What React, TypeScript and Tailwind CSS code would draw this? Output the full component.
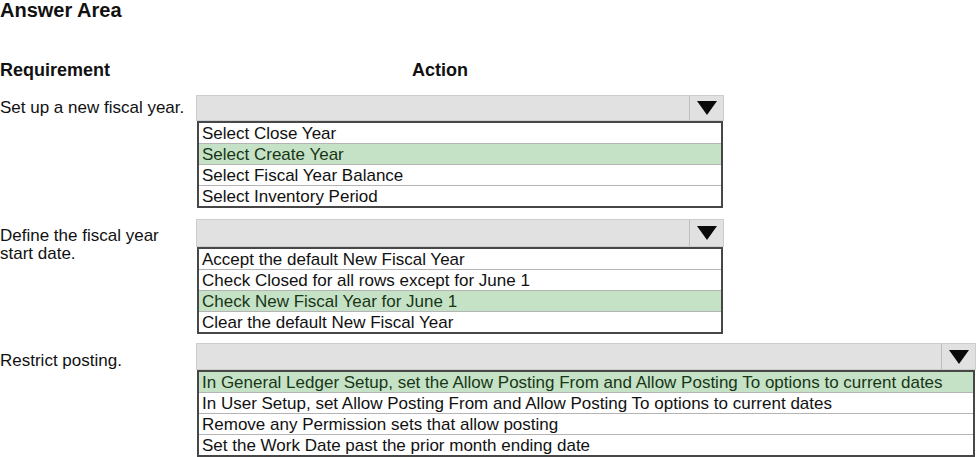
const sections = [
  {
    label: ['Set up a new fiscal year.'],
    labelPad: 'pt-[4px]',
    width: 'w-[528px]',
    headerH: 'h-[26px]',
    gap: 'mt-0',
    options: ['Select Close Year', 'Select Create Year', 'Select Fiscal Year Balance', 'Select Inventory Period'],
    selected: 1,
  },
  {
    label: ['Define the fiscal year', 'start date.'],
    labelPad: 'pt-[8px]',
    width: 'w-[528px]',
    headerH: 'h-[28px]',
    gap: 'mt-[11px]',
    options: [
      'Accept the default New Fiscal Year',
      'Check Closed for all rows except for June 1',
      'Check New Fiscal Year for June 1',
      'Clear the default New Fiscal Year',
    ],
    selected: 2,
  },
  {
    label: ['Restrict posting.'],
    labelPad: 'pt-[9px]',
    width: 'w-[780px]',
    headerH: 'h-[27px]',
    gap: 'mt-[9px]',
    options: [
      'In General Ledger Setup, set the Allow Posting From and Allow Posting To options to current dates',
      'In User Setup, set Allow Posting From and Allow Posting To options to current dates',
      'Remove any Permission sets that allow posting',
      'Set the Work Date past the prior month ending date',
    ],
    selected: 0,
  },
]

function Dropdown({ s }: { s: (typeof sections)[number] }) {
  return (
    <div className={s.width}>
      {/* closed select bar */}
      <div className={`flex ${s.headerH} bg-[#e1e1e1] border border-[#cdcdcd]`}>
        <div className="flex-1" />
        <div className="w-[34px] border-l border-[#bdbdbd] flex items-center justify-center">
          <svg width="20" height="14" viewBox="0 0 20 14">
            <polygon points="0,0 20,0 10,14" fill="#0a0a0a" />
          </svg>
        </div>
      </div>
      {/* option list */}
      <div className="ml-px mr-px border-2 border-[#474747] bg-white">
        {s.options.map((o, i) => (
          <div
            key={o}
            className={`pl-[3px] pt-px leading-[19px] text-[17px] whitespace-nowrap ${
              i > 0 ? 'border-t border-[#b4b4b4]' : ''
            } ${i === s.selected ? 'bg-[#c6e2c6] text-[#173617]' : 'text-[#111]'}`}
          >
            {o}
          </div>
        ))}
      </div>
    </div>
  )
}

export default function App() {
  return (
    <div
      className="w-[976px] h-[457px] overflow-hidden bg-white text-[#111]"
      style={{ fontFamily: '"Liberation Sans", Arial, sans-serif' }}
    >
      <h1 className="text-[20px] leading-[20px] font-bold">Answer Area</h1>

      <div className="flex mt-[39px] h-[22px] items-center text-[18px] font-bold">
        <div className="w-[196px]">Requirement</div>
        <div className="w-[488px] text-center">Action</div>
      </div>

      <div className="mt-[14px]">
        {sections.map((s) => (
          <div key={s.label[0]} className={`flex ${s.gap}`}>
            <div className={`w-[196px] shrink-0 ${s.labelPad} text-[17px] leading-[18px]`}>
              {s.label.map((l) => (
                <div key={l}>{l}</div>
              ))}
            </div>
            <Dropdown s={s} />
          </div>
        ))}
      </div>
    </div>
  )
}
